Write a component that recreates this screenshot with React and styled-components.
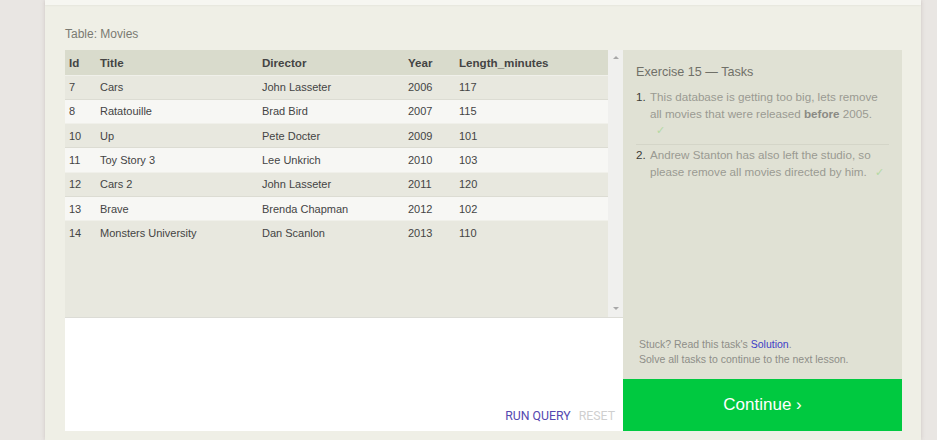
import React from 'react';
import styled, { createGlobalStyle } from 'styled-components';

const GlobalStyle = createGlobalStyle`
  html, body {
    margin: 0;
    padding: 0;
    background: #e9e6e3;
    font-family: "Liberation Sans", Arial, sans-serif;
    overflow: hidden;
  }
`;

const movies = [
  [7, 'Cars', 'John Lasseter', 2006, 117],
  [8, 'Ratatouille', 'Brad Bird', 2007, 115],
  [10, 'Up', 'Pete Docter', 2009, 101],
  [11, 'Toy Story 3', 'Lee Unkrich', 2010, 103],
  [12, 'Cars 2', 'John Lasseter', 2011, 120],
  [13, 'Brave', 'Brenda Chapman', 2012, 102],
  [14, 'Monsters University', 'Dan Scanlon', 2013, 110],
];

const columns = [
  { label: 'Id', width: 31 },
  { label: 'Title', width: 162 },
  { label: 'Director', width: 146 },
  { label: 'Year', width: 51 },
  { label: 'Length_minutes' },
];

const App = () => {
  return (
    <>
      <GlobalStyle />
      <Page>
        <Card>
          <TopStrip />
          <Body>
            <Caption>Table: Movies</Caption>
            <Workspace>
              <LeftColumn>
                <ResultBox>
                  <TableScroll>
                    <Table>
                      <colgroup>
                        {columns.map((c) => (
                          <col key={c.label} style={c.width ? { width: c.width } : undefined} />
                        ))}
                      </colgroup>
                      <thead>
                        <tr>
                          {columns.map((c) => (
                            <Th key={c.label}>{c.label}</Th>
                          ))}
                        </tr>
                      </thead>
                      <tbody>
                        {movies.map((m, i) => (
                          <Row key={m[0]} $alt={i % 2 === 1}>
                            {m.map((v, j) => (
                              <Td key={j}>{v}</Td>
                            ))}
                          </Row>
                        ))}
                      </tbody>
                    </Table>
                  </TableScroll>
                  <ScrollTrack>
                    <Arrow $up />
                    <Arrow />
                  </ScrollTrack>
                </ResultBox>
                <Editor>
                  <EditorActions>
                    <ActionButton $primary>RUN QUERY</ActionButton>
                    <ActionButton>RESET</ActionButton>
                  </EditorActions>
                </Editor>
              </LeftColumn>
              <TaskPanel>
                <TaskContent>
                  <TaskTitle>Exercise 15 — Tasks</TaskTitle>
                  <TaskList>
                    <TaskItem>
                      <TaskNum>1.</TaskNum>
                      <TaskText>
                        This database is getting too big, lets remove all movies that were released{' '}
                        <b>before</b> 2005.
                        <Check $block>✓</Check>
                      </TaskText>
                    </TaskItem>
                    <TaskItem $last>
                      <TaskNum>2.</TaskNum>
                      <TaskText>
                        Andrew Stanton has also left the studio, so please remove all movies directed by him.
                        <Check>✓</Check>
                      </TaskText>
                    </TaskItem>
                  </TaskList>
                </TaskContent>
                <Hint>
                  Stuck? Read this task's <HintLink>Solution</HintLink>.
                  <br />
                  Solve all tasks to continue to the next lesson.
                </Hint>
                <ContinueButton>Continue ›</ContinueButton>
              </TaskPanel>
            </Workspace>
          </Body>
        </Card>
      </Page>
    </>
  );
};

const Page = styled.div`
  height: 440px;
  display: flex;
  padding-left: 45px;
`;

const Card = styled.div`
  width: 876px;
  height: 440px;
  background: #efefe6;
  box-shadow: 0 0 4px rgba(120, 100, 100, 0.25);
  display: flex;
  flex-direction: column;
`;

const TopStrip = styled.div`
  height: 5px;
  background: #f6f6f1;
  box-shadow: 0 1px 2px rgba(0, 0, 0, 0.04);
`;

const Body = styled.div`
  padding: 0 19px 0 20px;
  display: flex;
  flex-direction: column;
`;

const Caption = styled.div`
  font-size: 12px;
  color: #7a7a72;
  height: 45px;
  line-height: 14px;
  padding-top: 22px;
  box-sizing: border-box;
`;

const Workspace = styled.div`
  display: flex;
  height: 381px;
`;

const LeftColumn = styled.div`
  width: 558px;
  display: flex;
  flex-direction: column;
`;

const ResultBox = styled.div`
  height: 267px;
  display: flex;
  background: #e8e8df;
`;

const TableScroll = styled.div`
  flex: 1;
  overflow: hidden;
`;

const Table = styled.table`
  width: 100%;
  border-collapse: collapse;
  font-size: 11px;
  color: #444;
  table-layout: fixed;
`;

const Th = styled.th`
  box-sizing: border-box;
  text-align: left;
  font-weight: bold;
  background: #d9dbcc;
  color: #444;
  height: 25px;
  padding: 0 0 0 4px;
  font-size: 11.6px;
`;

const Row = styled.tr`
  background: ${(p) => (p.$alt ? '#f7f7f4' : '#e8e8df')};
  border-top: 1px solid ${(p) => (p.$alt ? '#dcdcd3' : '#f0f0ea')};
`;

const Td = styled.td`
  box-sizing: border-box;
  height: 24.33px;
  padding: 0 0 0 4px;
  white-space: nowrap;
`;

const ScrollTrack = styled.div`
  width: 15px;
  background: #f0f0ee;
  display: flex;
  flex-direction: column;
  justify-content: space-between;
  align-items: center;
  padding: 6px 0 7px;
  box-sizing: border-box;
`;

const Arrow = styled.div`
  width: 0;
  height: 0;
  border-left: 3px solid transparent;
  border-right: 3px solid transparent;
  ${(p) => (p.$up ? 'border-bottom: 3px solid #a8a8a8;' : 'border-top: 3px solid #a8a8a8;')}
`;

const Editor = styled.div`
  flex: 1;
  background: #fff;
  border-top: 1px solid #dcdcd6;
  display: flex;
  flex-direction: column;
  justify-content: flex-end;
`;

const EditorActions = styled.div`
  display: flex;
  justify-content: flex-end;
  gap: 8px;
  padding: 0 8px 8px 0;
`;

const ActionButton = styled.span`
  font-family: "Roboto", "Liberation Sans", sans-serif;
  font-size: 12.3px;
  color: ${(p) => (p.$primary ? '#5548b0' : '#cfcfcf')};
`;

const TaskPanel = styled.div`
  width: 279px;
  background: #e0e1d4;
  display: flex;
  flex-direction: column;
`;

const TaskContent = styled.div`
  flex: 1;
  padding: 15px 13px 0 13px;
`;

const TaskTitle = styled.div`
  font-size: 12.6px;
  color: #707068;
  margin-bottom: 9px;
`;

const TaskList = styled.ol`
  list-style: none;
  margin: 0;
  padding: 0;
`;

const TaskItem = styled.li`
  display: flex;
  font-size: 11.65px;
  line-height: 17px;
  padding: ${(p) => (p.$last ? '0' : '0 0 5px 0')};
  margin-bottom: 1px;
  border-bottom: ${(p) => (p.$last ? 'none' : '1px solid #d4d5c8')};
`;

const TaskNum = styled.span`
  color: #3c3c38;
  width: 14px;
  flex: none;
`;

const TaskText = styled.span`
  color: #9a9a92;
  b {
    color: #8a8a84;
  }
`;

const Check = styled.span`
  color: #b4d9a4;
  font-size: 11px;
  margin-left: ${(p) => (p.$block ? '6px' : '8px')};
  display: ${(p) => (p.$block ? 'block' : 'inline')};
`;

const Hint = styled.div`
  font-size: 10.5px;
  line-height: 15px;
  color: #8e8e88;
  padding: 0 16px 12px 16px;
`;

const HintLink = styled.a`
  color: #3d3dc6;
  text-decoration: none;
`;

const ContinueButton = styled.div`
  height: 52px;
  background: #00c940;
  color: #fff;
  font-size: 17px;
  display: flex;
  align-items: center;
  justify-content: center;
`;

export default App;
